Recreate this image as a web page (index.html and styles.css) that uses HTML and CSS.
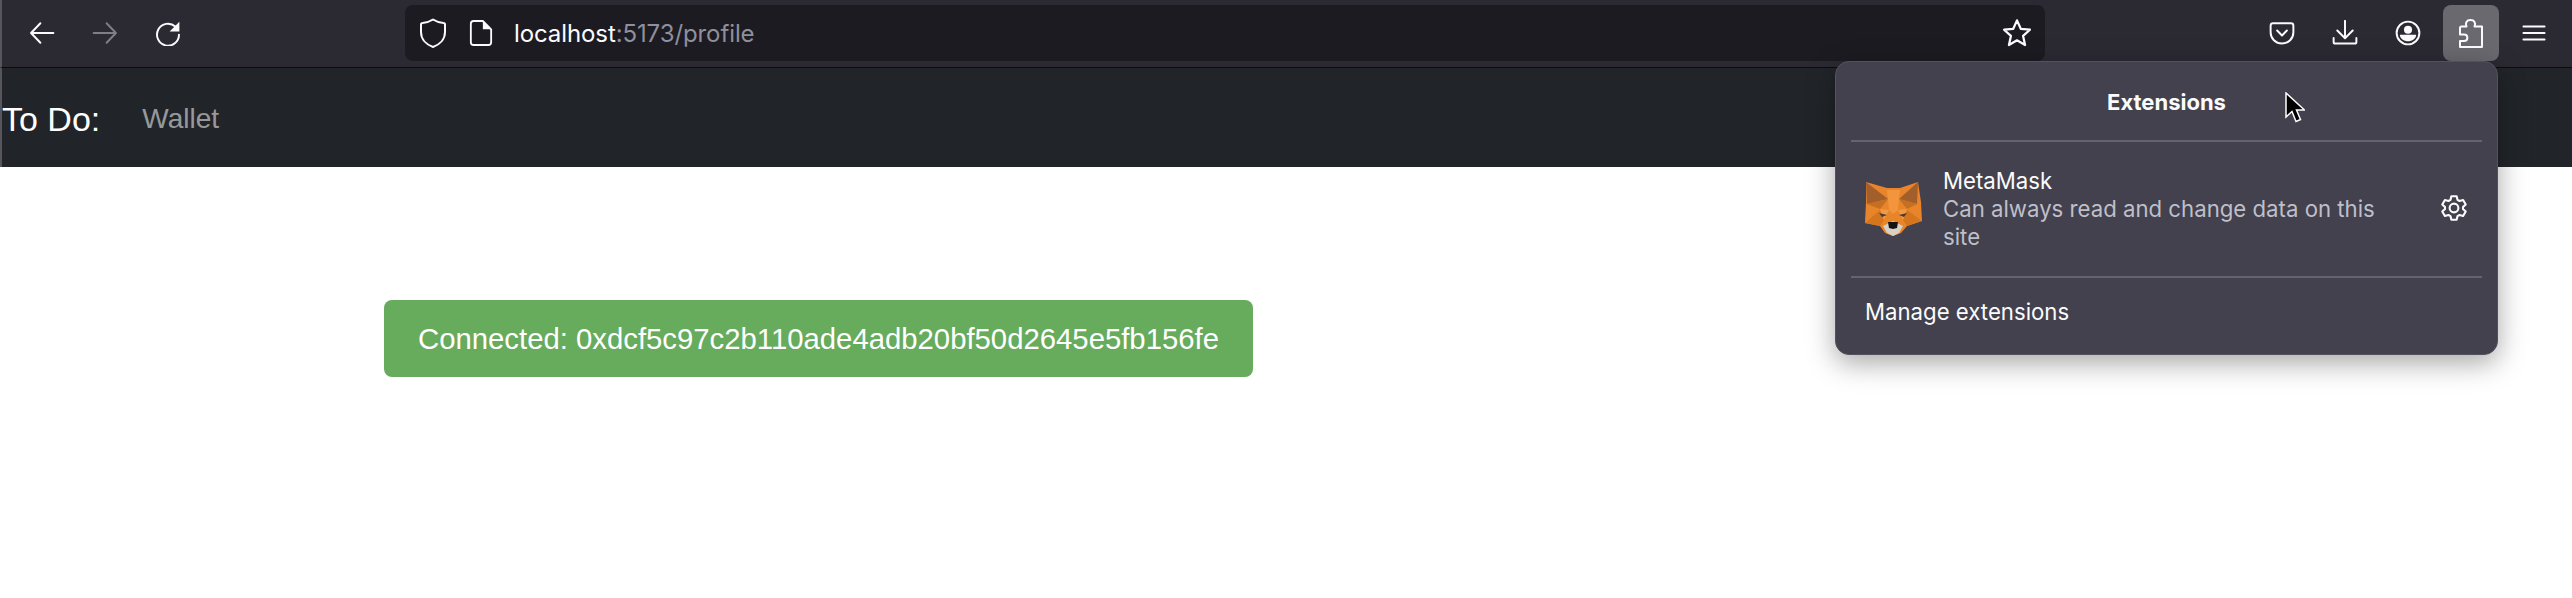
FILE: index.html
```html
<!DOCTYPE html>
<html lang="en">
<head>
<meta charset="utf-8">
<title>localhost:5173/profile</title>
<link rel="stylesheet" href="styles.css">
</head>
<body>
<header class="toolbar">
  <div class="btn-group">
    <span class="tb-btn"><svg class="ic" viewBox="0 0 32 32"><path d="M30 16H3M14 4 2.500 16 14 28"/></svg></span>
    <span class="tb-btn dim"><svg class="ic" viewBox="0 0 32 32"><path d="M2 16h27M18 4l11.500 12L18 28"/></svg></span>
    <span class="tb-btn"><svg class="ic" viewBox="0 0 32 32"><path d="M25 8A13.500 13.500 0 1 0 29.500 18"/><path class="fill" d="M30 2v12H18z"/></svg></span>
  </div>
  <div class="urlbar">
    <svg class="ic shield" viewBox="0 0 32 32"><path d="M16 2.500c3 2 7 3.200 10.500 3.500 1 0 1.500.5 1.500 1.500V15c0 7-5 12.500-12 15C9 27.500 4 22 4 15V7.500C4 6.500 4.500 6 5.500 6 9 5.700 13 4.500 16 2.500z"/></svg>
    <svg class="ic page" viewBox="0 0 26 28"><path d="M2 4a3 3 0 0 1 3-3h10l9 9v14a3 3 0 0 1-3 3H5a3 3 0 0 1-3-3z"/><path class="fill" d="M15 1l9 9h-9z"/></svg>
    <span class="url"><span class="host">localhost</span><span class="path">:5173/profile</span></span>
    <svg class="ic star" viewBox="0 0 32 32"><path d="m16 2.500 4 9 9.800 1-7.300 6.600 2.100 9.700L16 23.800l-8.600 5 2.100-9.700L2.200 12.500l9.800-1z"/></svg>
  </div>
  <div class="btn-group right">
    <span class="tb-btn"><svg class="ic" viewBox="0 0 32 32"><path d="M5 4h22a3 3 0 0 1 3 3v8c0 8-6 14-14 14S2 23 2 15V7a3 3 0 0 1 3-3z"/><path d="m10 13 6 6 6-6"/></svg></span>
    <span class="tb-btn"><svg class="ic" viewBox="0 0 32 32"><path d="M16 1v21M6.500 13 16 22.500 25.500 13M2 22v5a2 2 0 0 0 2 2h24a2 2 0 0 0 2-2v-5"/></svg></span>
    <span class="tb-btn"><svg class="ic" viewBox="0 0 32 32"><circle cx="16" cy="16" r="14"/><circle class="fill" cx="16" cy="12" r="5"/><path class="fill" d="M6 18h20c0 5-5 8-10 8S6 23 6 18z"/></svg></span>
    <span class="tb-btn active"><svg class="ic puzzle" viewBox="19 10 26 31"><path d="M27.500 18.500c-1.500-3.500 0-6.500 4-6.500s5.500 3 4 6.500H43V39H21V33h4c4.500 0 4.500-6.500 0-6.500h-4V20q0-1.500 1.500-1.500z"/></svg></span>
    <span class="tb-btn"><svg class="ic" viewBox="0 0 32 32"><path d="M3 8h26M3 16h26M3 24h26"/></svg></span>
  </div>
</header>

<nav class="navbar">
  <span class="brand">To Do:</span>
  <a class="nav-link">Wallet</a>
</nav>

<main class="content">
  <div class="alert">Connected: 0xdcf5c97c2b110ade4adb20bf50d2645e5fb156fe</div>
</main>

<aside class="panel">
  <h2 class="panel-title">Extensions</h2>
  <hr class="sep">
  <div class="ext-row">
    <svg class="fox" viewBox="5 4 57 56">
      <path fill="#e8842a" d="M6 6 27 12H40L58 6 61 26 62 45 47 50 41 57 33 60 25 57 20 50 5 47 6 26z"/>
      <path fill="#f2953c" d="M27 14H40L38 34 33 38 29 34z"/>
      <path fill="#a25f2c" d="M6 6 28 23 7 28z"/>
      <path fill="#a25f2c" d="M58 6 39 23 57 28z"/>
      <path fill="#c46f22" d="M7 28 28 23 20 33zM57 28 39 23 47 33z"/>
      <path fill="#d5761f" d="M5 47 20 34 24 44 20 50zM62 45 47 34 43 44 47 50z"/>
      <path fill="#f09a47" d="m20 33 9 1-5 10zM47 33l-9 1 5 10z"/>
      <path fill="#4b3a30" d="m19 37 8 2-5 2zM47 37l-8 2 5 2z"/>
      <path fill="#d9d0c4" d="m23 50 10-5 10 5-4 7-6 3-6-3z"/>
      <path fill="#141414" d="M28 46h10l-1 6-4 1-4-1z"/>
    </svg>
    <div class="ext-text">
      <div class="ext-name">MetaMask</div>
      <div class="ext-desc">Can always read and change data on this site</div>
    </div>
    <svg class="ic gear" viewBox="0 0 32 32"><circle cx="16" cy="16" r="5"/><path d="M13 2.500h6l1 4.200 2.300 1.300 4.100-1.200 3 5.100-3.100 3v2.200l3.100 3-3 5.100-4.100-1.200-2.300 1.300-1 4.200h-6l-1-4.200L9.700 24l-4.100 1.200-3-5.100 3.100-3v-2.200l-3.100-3 3-5.100L9.700 8 12 6.700z"/></svg>
  </div>
  <hr class="sep">
  <div class="manage">Manage extensions</div>
</aside>

<svg class="cursor" viewBox="0 0 20 32"><path d="M1.500 1v24l6-5.500 4 10 4.500-2-4-9.500h8z"/></svg>
</body>
</html>
```
FILE: styles.css
```css
* { box-sizing: border-box; }
html, body { margin: 0; padding: 0; background: #fff; height: 100%; overflow: hidden; }
body { font-family: "Liberation Sans", Arial, sans-serif; position: relative; }

.toolbar {
  height: 68px;
  display: flex;
  align-items: center;
  background: #2b2a33;
  border-bottom: 1px solid #0c0c0f;
  border-left: 2px solid #55555b;
  padding: 0 10px 1px 12px;
  font-family: Inter, "Liberation Sans", sans-serif;
}
.btn-group { display: flex; gap: 7px; }
.btn-group.right { margin-left: auto; }
.tb-btn {
  width: 56px; height: 56px; border-radius: 8px;
  display: flex; align-items: center; justify-content: center;
}
.tb-btn.dim { opacity: .4; }
.tb-btn.active { background: #6a6970; }
.ic { width: 26px; height: 26px; fill: none; stroke: #fbfbfe; stroke-width: 2.400; stroke-linejoin: round; stroke-linecap: round; flex: none; }
.ic .fill { fill: #fbfbfe; stroke: none; }
.ic.puzzle { width: 26px; height: 31px; stroke-width: 2; }

.urlbar {
  width: 1640px; height: 56px; margin-left: 209px;
  background: #1c1b22; border-radius: 8px;
  display: flex; align-items: center; padding: 0 13px 0 12px;
}
.ic.shield { width: 32px; height: 32px; stroke-width: 2; }
.ic.page { width: 24px; height: 26px; margin-left: 20px; stroke-width: 2; }
.url { margin-left: 21px; font-size: 24px; letter-spacing: -.1px; }
.host { color: #fbfbfe; }
.path { color: #8f8f9d; }
.ic.star { width: 30px; height: 30px; margin-left: auto; }

.navbar {
  height: 99px;
  display: flex; align-items: center;
  background: #212529;
  border-left: 2px solid #55555b;
  padding-top: 3px;
}
.brand { color: #fff; font-size: 34px; }
.nav-link { color: rgba(255,255,255,.55); font-size: 28px; margin-left: 42px; }

.content { padding: 133px 0 0 384px; }
.alert {
  width: 869px; height: 77px;
  background: #67ab5d; color: #fff;
  border-radius: 8px;
  font-size: 29.300px;
  display: flex; align-items: center; justify-content: center;
}

.panel {
  position: absolute; left: 1835px; top: 61px;
  width: 663px; height: 294px;
  background: #42414d;
  border: 1px solid #52515c;
  border-radius: 14px;
  box-shadow: 0 8px 28px rgba(0,0,0,.35);
  color: #fbfbfe;
  font-family: Inter, "Liberation Sans", sans-serif;
  padding: 0 15px;
}
.panel-title { margin: 0; height: 78px; display: flex; align-items: center; justify-content: center; font-size: 22px; font-weight: 700; padding-top: 1px; }
.sep { margin: 0; border: 0; height: 2px; background: #65646e; }
.ext-row { height: 134px; display: flex; align-items: center; padding: 0 14px 2px; }
.fox { width: 57px; height: 56px; flex: none; }
.ext-text { margin-left: 21px; width: 460px; font-size: 22.200px; line-height: 28px; }
.ext-name { padding-top: 1px; }
.ext-desc { color: #bfbfc9; }
.gear { width: 28px; height: 30px; margin-left: auto; margin-right: 0; }
.manage { padding: 20px 14px 0; font-size: 22.200px; line-height: 28px; }

.cursor { position: absolute; left: 2284px; top: 92px; width: 21px; height: 32px; fill: #000; stroke: #fff; stroke-width: 1.500; }
```
